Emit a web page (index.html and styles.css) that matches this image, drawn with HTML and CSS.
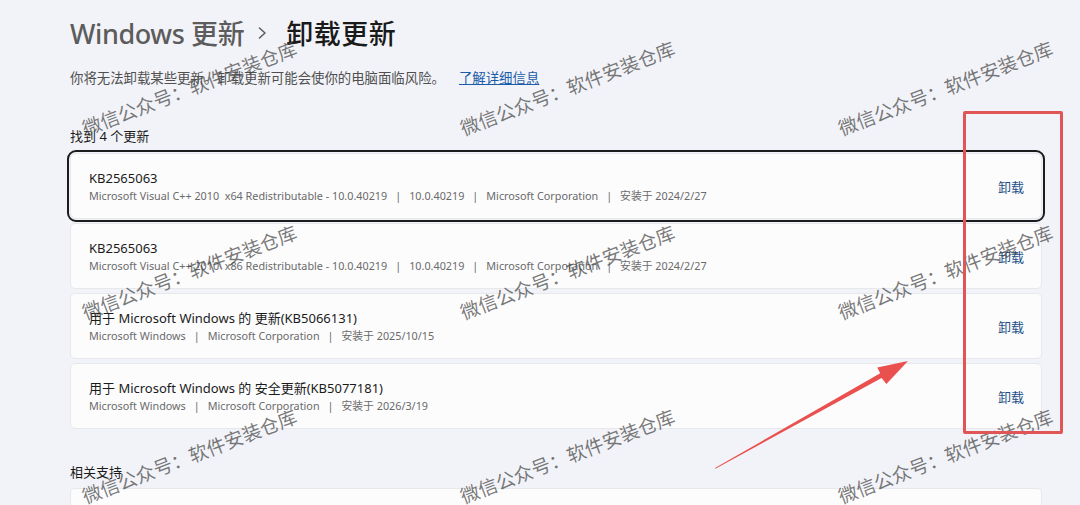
FILE: index.html
```html
<!DOCTYPE html>
<html lang="zh-CN">
<head>
    <meta charset="UTF-8">
    <meta name="viewport" content="width=device-width, initial-scale=1.0">
    <title>卸载更新</title>
    <link rel="stylesheet" href="styles.css">
</head>
<body>
    <main class="page">
        <header class="crumbs">
            <span class="crumb-parent">Windows 更新</span>
            <svg class="crumb-chevron" width="9" height="12" viewBox="0 0 9 12"><polyline points="1.5,1 7,6 1.5,11" fill="none" stroke="#5c5c5c" stroke-width="1.5" stroke-linecap="round" stroke-linejoin="round"/></svg>
            <span class="crumb-current">卸载更新</span>
        </header>

        <p class="intro">你将无法卸载某些更新。卸载更新可能会使你的电脑面临风险。<a class="intro-link" href="#">了解详细信息</a></p>

        <h2 class="section-label">找到 4 个更新</h2>
        <div class="update-list">
            <div class="update-card focused">
                <div class="update-info">
                    <div class="update-name">KB2565063</div>
                    <div class="update-meta">Microsoft Visual C++ 2010&nbsp; x64 Redistributable - 10.0.40219<span class="sep">|</span>10.0.40219<span class="sep">|</span>Microsoft Corporation<span class="sep">|</span>安装于 2024/2/27</div>
                </div>
                <a class="uninstall" href="#">卸载</a>
            </div>
            <div class="update-card">
                <div class="update-info">
                    <div class="update-name">KB2565063</div>
                    <div class="update-meta">Microsoft Visual C++ 2010&nbsp; x86 Redistributable - 10.0.40219<span class="sep">|</span>10.0.40219<span class="sep">|</span>Microsoft Corporation<span class="sep">|</span>安装于 2024/2/27</div>
                </div>
                <a class="uninstall" href="#">卸载</a>
            </div>
            <div class="update-card">
                <div class="update-info">
                    <div class="update-name">用于 Microsoft Windows 的 更新(KB5066131)</div>
                    <div class="update-meta">Microsoft Windows<span class="sep">|</span>Microsoft Corporation<span class="sep">|</span>安装于 2025/10/15</div>
                </div>
                <a class="uninstall" href="#">卸载</a>
            </div>
            <div class="update-card">
                <div class="update-info">
                    <div class="update-name">用于 Microsoft Windows 的 安全更新(KB5077181)</div>
                    <div class="update-meta">Microsoft Windows<span class="sep">|</span>Microsoft Corporation<span class="sep">|</span>安装于 2026/3/19</div>
                </div>
                <a class="uninstall" href="#">卸载</a>
            </div>
        </div>

        <h2 class="section-label related">相关支持</h2>
        <div class="support-card"></div>
    </main>

    <!-- watermark tiles -->
    <div class="watermarks">
        <span class="wm">微信公众号：软件安装仓库</span>
        <span class="wm">微信公众号：软件安装仓库</span>
        <span class="wm">微信公众号：软件安装仓库</span>
        <span class="wm">微信公众号：软件安装仓库</span>
        <span class="wm">微信公众号：软件安装仓库</span>
        <span class="wm">微信公众号：软件安装仓库</span>
        <span class="wm">微信公众号：软件安装仓库</span>
        <span class="wm">微信公众号：软件安装仓库</span>
        <span class="wm">微信公众号：软件安装仓库</span>
    </div>

    <!-- annotation -->
    <div class="mark-box"></div>
    <svg class="mark-arrow" width="1080" height="505" viewBox="0 0 1080 505">
        <polygon points="715,468 715.4,468.8 881.6,377.9 886.4,384 908,361 877.3,367.4 880.2,373.2" fill="#e9504e"/>
    </svg>
</body>
</html>
```

FILE: styles.css
```css
html, body {
    margin: 0;
    height: 505px;
    overflow: hidden;
}
body {
    position: relative;
    background: #f2f3f8;
    font-family: "Noto Sans", "Noto Sans CJK SC", sans-serif;
    color: #1b1b1b;
}
.page {
    padding: 12px 38px 0 70px;
}
.crumbs {
    display: flex;
    align-items: center;
    height: 40px;
    font-size: 27px;
    font-weight: 500;
}
.crumb-parent {
    color: #5c5c5c;
    letter-spacing: -0.4px;
}
.crumb-chevron {
    margin: 2px 19px 0 14px;
}
.crumb-current {
    color: #1a1a1a;
    letter-spacing: 0.5px;
}
.intro {
    margin: 16px 0 0;
    font-size: 13.4px;
    line-height: 20px;
    color: #4f4f4f;
}
.intro-link {
    margin-left: 14px;
    color: #1a5ca8;
    text-decoration: underline;
}
.section-label {
    margin: 38px 0 0;
    font-size: 13px;
    line-height: 20px;
    font-weight: 400;
    color: #1b1b1b;
}
.section-label.related {
    margin-top: 33px;
}
.update-list {
    display: flex;
    flex-direction: column;
    gap: 4px;
    margin-top: 7px;
}
.update-card {
    display: flex;
    align-items: center;
    height: 66px;
    box-sizing: border-box;
    padding: 0 17px 0 18px;
    background: #fcfcfd;
    border: 1px solid #e7e8ec;
    border-radius: 5px;
}
.update-card.focused {
    outline: 2px solid #1c1c1c;
    outline-offset: 1px;
    border-radius: 6px;
}
.update-info {
    flex: 1;
    display: flex;
    flex-direction: column;
    padding-top: 1px;
}
.update-name {
    font-size: 13px;
    line-height: 17px;
    color: #1b1b1b;
}
.update-meta {
    font-size: 10.8px;
    line-height: 17px;
    color: #6a6a6a;
}
.sep {
    margin: 0 8px;
}
.uninstall {
    font-size: 13px;
    color: #1e4f87;
    text-decoration: none;
}
.support-card {
    margin-top: 6px;
    height: 17px;
    background: #fcfcfd;
    border: 1px solid #e7e8ec;
    border-bottom: none;
    border-radius: 5px 5px 0 0;
}

/* watermark overlay */
.watermarks {
    position: absolute;
    inset: 0;
    overflow: hidden;
    padding-left: 86px;
    display: grid;
    grid-template-columns: 378px 378px 1fr;
    grid-template-rows: 137px 184px 184px;
    pointer-events: none;
}
.wm {
    align-self: end;
    justify-self: start;
    font-family: "Noto Sans CJK SC", sans-serif;
    font-size: 19px;
    line-height: 1;
    white-space: nowrap;
    color: rgba(70, 70, 70, 0.72);
    transform: rotate(-21deg);
    transform-origin: left bottom;
}

/* red annotation */
.mark-box {
    position: absolute;
    left: 963px;
    top: 111px;
    width: 94px;
    height: 317px;
    border: 3px solid #e05656;
    border-radius: 2px;
}
.mark-arrow {
    position: absolute;
    left: 0;
    top: 0;
}
```
